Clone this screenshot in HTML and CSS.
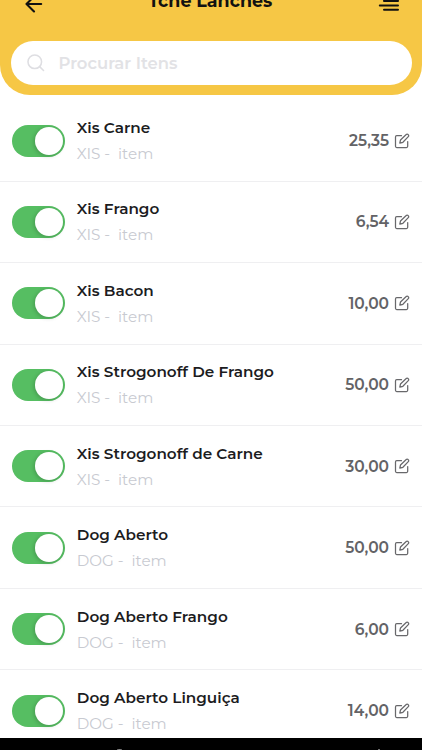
FILE: index.html
```html
<!DOCTYPE html>
<html lang="pt-BR">
<head>
<meta charset="utf-8">
<title>Tchê Lanches</title>
<link rel="stylesheet" href="styles.css">
</head>
<body>
<svg class="defs" width="0" height="0" aria-hidden="true">
  <symbol id="edit" viewBox="0 0 16 16">
    <path d="M7.5 2.7H2.7Q1.5 2.7 1.5 3.9v9.4q0 1.2 1.2 1.2h9.8q1.2 0 1.2-1.2V8.5M5.8 10.2l.7-3.2L12.2 1.5a1.3 1.3 0 0 1 1.9 0l.2.2a1.3 1.3 0 0 1 0 1.9L8.9 9.3Z"/>
  </symbol>
</svg>
<div class="screen">
  <header class="header">
    <div class="bar">
      <svg class="back" viewBox="0 0 18 18"><path d="M16.2 9H2M9 1.5 1.5 9 9 16.5"/></svg>
      <h1 class="title">Tchê Lanches</h1>
      <svg class="menu" viewBox="0 0 22 16"><path d="M6 4.9h14M6 6.1h14M1.8 10.4H20M6 14.8h14"/></svg>
    </div>
    <div class="search">
      <svg class="glass" viewBox="0 0 18 18"><circle cx="8" cy="8" r="7"/><path d="m13 13 4 4"/></svg>
      <span class="hint">Procurar Itens</span>
    </div>
  </header>
  <main class="list">
    <div class="row"><span class="toggle"></span><div class="info"><div class="name">Xis Carne</div><div class="sub">XIS - &nbsp;item</div></div><span class="price">25,35</span><svg class="edit"><use href="#edit"/></svg></div>
    <div class="row"><span class="toggle"></span><div class="info"><div class="name">Xis Frango</div><div class="sub">XIS - &nbsp;item</div></div><span class="price">6,54</span><svg class="edit"><use href="#edit"/></svg></div>
    <div class="row"><span class="toggle"></span><div class="info"><div class="name">Xis Bacon</div><div class="sub">XIS - &nbsp;item</div></div><span class="price">10,00</span><svg class="edit"><use href="#edit"/></svg></div>
    <div class="row"><span class="toggle"></span><div class="info"><div class="name">Xis Strogonoff De Frango</div><div class="sub">XIS - &nbsp;item</div></div><span class="price">50,00</span><svg class="edit"><use href="#edit"/></svg></div>
    <div class="row"><span class="toggle"></span><div class="info"><div class="name">Xis Strogonoff de Carne</div><div class="sub">XIS - &nbsp;item</div></div><span class="price">30,00</span><svg class="edit"><use href="#edit"/></svg></div>
    <div class="row"><span class="toggle"></span><div class="info"><div class="name">Dog Aberto</div><div class="sub">DOG - &nbsp;item</div></div><span class="price">50,00</span><svg class="edit"><use href="#edit"/></svg></div>
    <div class="row"><span class="toggle"></span><div class="info"><div class="name">Dog Aberto Frango</div><div class="sub">DOG - &nbsp;item</div></div><span class="price">6,00</span><svg class="edit"><use href="#edit"/></svg></div>
    <div class="row"><span class="toggle"></span><div class="info"><div class="name">Dog Aberto Linguiça</div><div class="sub">DOG - &nbsp;item</div></div><span class="price">14,00</span><svg class="edit"><use href="#edit"/></svg></div>
  </main>
  <footer class="system"><span class="home"></span><span class="recent"></span></footer>
</div>
</body>
</html>
```
FILE: styles.css
```css
* { box-sizing: border-box; }
body { margin: 0; background: #fff; font-family: Montserrat, Inter, sans-serif; }
.defs { display: block; }
.screen { width: 422px; height: 750px; overflow: hidden; display: flex; flex-direction: column; }
svg { fill: none; stroke-linecap: round; stroke-linejoin: round; flex: none; }
.header { height: 95px; flex: none; background: #f6c745; border-radius: 0 0 30px 30px; padding: 0 10.5px; }
.bar { height: 41px; display: flex; justify-content: space-between; align-items: flex-start; padding: 0 11.5px 0 14px; }
.back { width: 18px; height: 18px; margin-top: -5.5px; stroke: #111; stroke-width: 2.1; }
.title { margin: -9px 0 0; font-size: 17.4px; line-height: 20px; font-weight: 700; color: #111; white-space: nowrap; }
.menu { width: 22px; height: 16px; margin-top: -5px; stroke: #111; stroke-width: 2; }
.search { height: 44px; border-radius: 22px; background: #fff; display: flex; align-items: center; gap: 14px; padding-left: 16.5px; }
.glass { width: 17.5px; height: 17.5px; stroke: #dedee2; stroke-width: 1.6; }
.hint { font-size: 16.4px; font-weight: 600; color: #e2e2e5; }
.list { flex: 1; min-height: 0; overflow: hidden; padding-top: 5.3px; }
.row { height: 81.45px; display: flex; align-items: center; padding: 0 12px 0 12px; border-bottom: 1.5px solid #efeff1; }
.toggle { width: 52.5px; height: 32px; border-radius: 16px; background: #56be62; padding: 2px 1.5px 2px 22.5px; flex: none; }
.toggle::before { content: ""; display: block; width: 28px; height: 28px; border-radius: 50%; background: #fff; box-shadow: -1px 1px 4px rgba(0, 0, 0, .2); }
.info { flex: 1; margin: .8px 0 0 12.3px; white-space: nowrap; }
.name { font-size: 15.25px; line-height: 26px; font-weight: 600; color: #1c1c1e; }
.sub { font-size: 15.2px; line-height: 26px; font-weight: 400; color: #c8cad1; }
.price { font-size: 15.5px; font-weight: 600; color: #636366; margin-right: 5px; }
.edit { width: 16px; height: 16px; stroke: #68686b; stroke-width: 1.25; }
.system { height: 12.5px; flex: none; background: #000; position: relative; overflow: hidden; }
.home, .recent { position: absolute; background: #888; border-radius: 50% 50% 0 0; }
.home { left: 117px; top: 11.5px; width: 5px; height: 1px; }
.recent { left: 378px; top: 11.5px; width: 2px; height: 1px; }
```
